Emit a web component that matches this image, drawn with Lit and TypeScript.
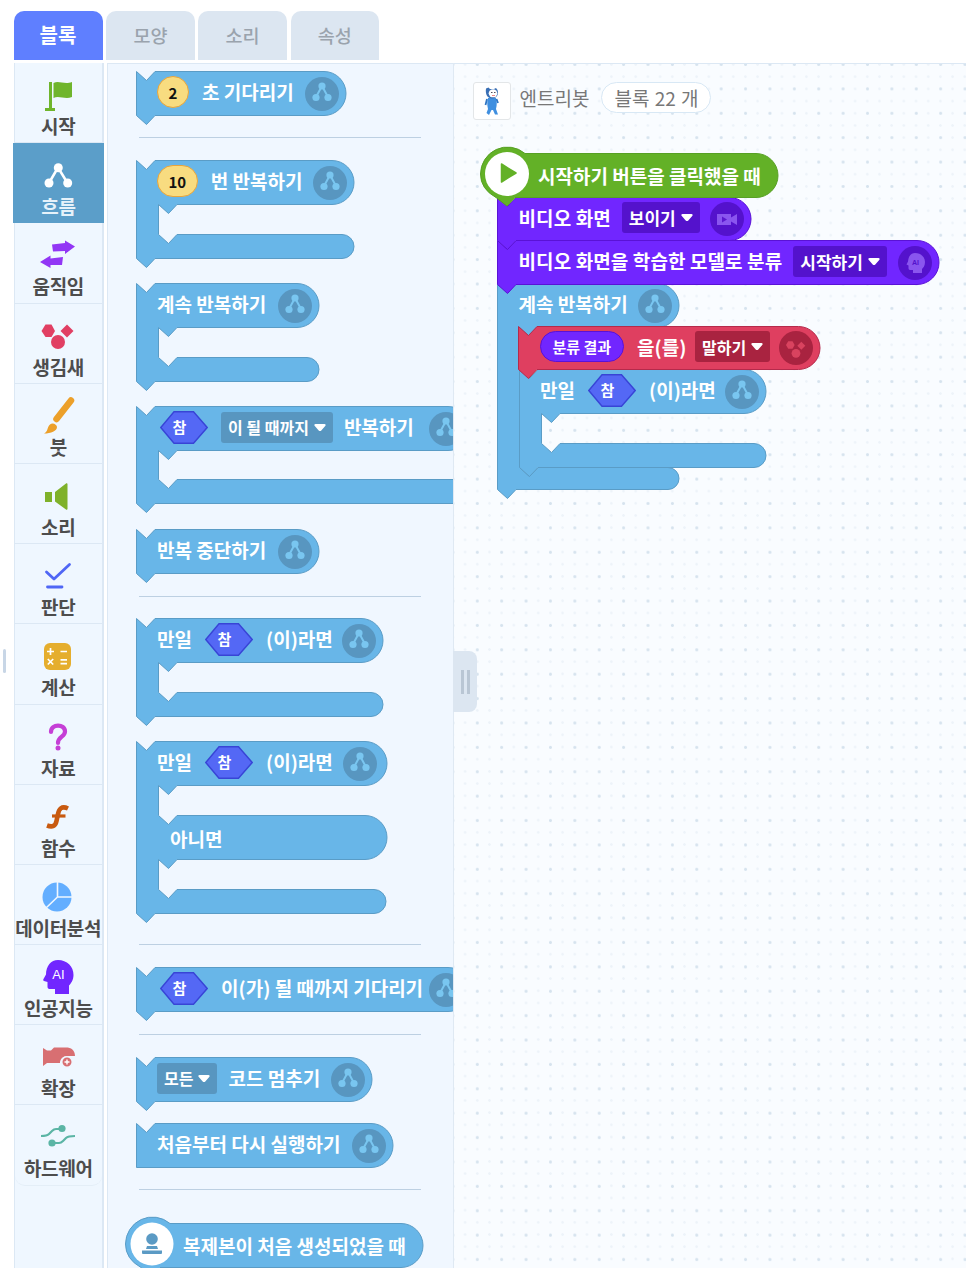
import { LitElement, html, css, svg, nothing } from "lit";
import { customElement, property } from "lit/decorators.js";

type Item =
  | { t: "text"; v: string }
  | { t: "num"; v: string }
  | { t: "hex" }
  | { t: "dd"; v: string }
  | { t: "pill"; v: string };

const T = (v: string): Item => ({ t: "text", v });
const N = (v: string): Item => ({ t: "num", v });
const H = (): Item => ({ t: "hex" });
const D = (v: string): Item => ({ t: "dd", v });
const P = (v: string): Item => ({ t: "pill", v });

interface Shape {
  w: number;
  gaps?: number[];
  mid?: number;
  barW?: number;
  barH?: number;
  notch?: boolean;
  h?: number;
  circleRight?: number;
}

function stmtPath(s: Shape) {
  const h = s.h ?? 44;
  const r = h / 2;
  const arm = 22;
  let d = `M.5,.5 L10.5,9.5 L19,.5 H${s.w - r} a${r},${r} 0 0 1 0,${h}`;
  let y = h + 0.5;
  const gaps = s.gaps ?? [];
  gaps.forEach((g, i) => {
    d += ` H${arm + 19} L${arm + 10.5},${y + 9} L${arm + 0.5},${y} V${y + g} L${arm + 10.5},${y + g + 9} L${arm + 19},${y + g}`;
    y += g;
    if (i < gaps.length - 1) {
      d += ` H${(s.mid ?? s.w) - 22} a22,22 0 0 1 0,44`;
      y += 44;
    } else {
      const bh = s.barH ?? 24;
      d += ` H${(s.barW ?? s.w) - bh / 2} a${bh / 2},${bh / 2} 0 0 1 0,${bh}`;
      y += bh;
    }
  });
  d += s.notch === false ? ` H.5 Z` : ` H19 L10.5,${y + 9} L.5,${y} Z`;
  return { d, height: y - 0.5 };
}

function hatPath(w: number) {
  return `M.5,28 A27,27 0 0 1 45,7.5 H${w - 22} a22,22 0 0 1 0,44 H35 L27,60 L16,51.5 Q.5,43 .5,28 Z`;
}

const flowIcon = svg`<svg class="ci" viewBox="0 0 34 34"><path d="M17 9 L11 20 M17 9 L23 20" fill="none" stroke="currentColor" stroke-width="2"/><circle cx="17" cy="9" r="3.6" fill="currentColor"/><circle cx="11" cy="20.5" r="3.6" fill="currentColor"/><circle cx="23" cy="20.5" r="3.6" fill="currentColor"/></svg>`;
const videoIcon = svg`<svg class="ci" viewBox="0 0 34 34"><path d="M7 12 H21 V23 H7 Z M21 15.5 L27 12 V23 L21 19.5 Z" fill="currentColor"/><path d="M12 14.5 L17 17.5 L12 20.5 Z" fill="#5c18cf"/></svg>`;
const aiIcon = svg`<svg class="ci" viewBox="0 0 34 34"><path d="M17 7 C23 7 27 11 27 16 C27 20 25 22 24 23 V27 H15 V24 H12 C11 24 10.5 23 10.5 22 V19.5 L8.5 18.5 L10 15.5 C10.5 10 13 7 17 7 Z" fill="currentColor"/><text x="17.5" y="19" text-anchor="middle" class="ait">AI</text></svg>`;
const looksIcon = svg`<svg class="ci" viewBox="0 0 34 34"><path d="M7 14 L9.200 10.300 H13.500 L15.600 14 L13.500 17.700 H9.200 Z" fill="currentColor"/><path d="M22.300 10.700 L26.300 14.700 L22.300 18.700 L18.300 14.700 Z" fill="currentColor"/><circle cx="17" cy="22.300" r="4.400" fill="currentColor"/></svg>`;
const circleIcons: Record<string, unknown> = { flow: flowIcon, video: videoIcon, ai: aiIcon, looks: looksIcon };
const arrow = svg`<svg class="arr" viewBox="0 0 12 9"><path d="M1.500 1 H10.500 C11.500 1 12 2 11.400 2.800 L7.300 7.400 C6.500 8.300 5.500 8.300 4.700 7.400 L.6 2.800 C0 2 .5 1 1.500 1 Z" fill="#fff"/></svg>`;

@customElement("code-block")
class CodeBlock extends LitElement {
  @property({ type: Object }) shape: Shape = { w: 100 };
  @property({ type: Array }) rows: Item[][] = [];
  @property() icon = "flow";
  @property() hat = "";
  @property() theme = "blue";

  static styles = css`
    :host {
      display: block;
      position: relative;
      --fill: #68b6e8;
      --line: #5a9cc6;
      --dark: #5896c0;
      --glyph: #79c6f0;
      font-family: "Noto Sans CJK KR", "Noto Sans", sans-serif;
      color: #fff;
    }
    :host([theme="purple"]) { --fill: #7126ff; --line: #5a12d6; --dark: #5412cc; --glyph: #8a55ef; }
    :host([theme="red"]) { --fill: #df3f60; --line: #b52a4b; --dark: #a92340; --glyph: #d9435f; }
    :host([theme="green"]) { --fill: #63b127; --line: #57a024; --dark: #4f8f1f; --glyph: #63b127; }
    .bg { position: absolute; left: 0; top: 0; overflow: visible; }
    .bg path.s { fill: var(--fill); stroke: var(--line); stroke-width: 1; }
    .wrap { display: flow-root; }
    .row {
      position: relative;
      display: flex;
      align-items: center;
      gap: 13px;
      height: 44px;
      padding-left: 21.5px;
      box-sizing: border-box;
      white-space: nowrap;
    }
    .row > * { flex: none; }
    .row.h43 { height: 43px; }
    .row.hatrow { padding-left: 58px; margin-top: 7px; height: 44px; }
    .row.else { padding-left: 34.500px; }
    .row.second { margin-top: 30px; }
    .text { font-size: 19px; font-weight: 700; line-height: 1; position: relative; top: -1.500px; }
    :host([theme="purple"]) .text { letter-spacing: 0.1px; }
    .hatrow .text { top: 0.500px; }
    .else .text { top: 1.500px; }
    .num {
      box-sizing: border-box;
      min-width: 32px;
      height: 32px;
      padding: 0 10.500px;
      border-radius: 16px;
      background: #f8dc80;
      border: 1.500px solid #e8a53c;
      color: #111;
      font-size: 15px;
      font-weight: 700;
      display: flex;
      align-items: center;
      justify-content: center;
      position: relative;
      top: -1px;
    }
    .num.one { padding: 0; }
    .hex { position: relative; width: 48px; height: 33px; top: -1px; }
    .hex svg { position: absolute; inset: 0; }
    .hex span {
      position: absolute; left: 9px; width: 21px; top: 0; height: 31px; display: flex; align-items: center; justify-content: center;
      font-size: 15px; font-weight: 700;
    }
    .first { margin-left: 3px; }
    .dd {
      display: flex; align-items: center; gap: 5px;
      height: 31px; padding: 0 7px; border-radius: 3px;
      background: var(--dark);
      font-size: 16px; font-weight: 700;
      position: relative; top: -1px; margin-right: -2px;
    }
    :host([theme="purple"]) .dd { font-size: 17px; margin-left: -2px; }
    :host([theme="red"]) .dd { margin-left: -4px; padding: 0 6.500px; }
    .arr { width: 12px; height: 9px; flex: none; }
    .pill {
      box-sizing: border-box; height: 31px; padding: 0 12px; border-radius: 16px;
      background: #7126ff; border: 1px solid #5a12d6;
      font-size: 15px; font-weight: 700; display: flex; align-items: center; position: relative; top: -1px;
    }
    .circle {
      position: absolute; top: 5.500px;
      width: 34px; height: 34px; border-radius: 50%;
      background: var(--dark); color: var(--glyph);
    }
    .row.h43 .circle { top: 5px; }
    .ci { width: 34px; height: 34px; display: block; }
    .ait { font: 700 7px "Liberation Sans", sans-serif; fill: var(--dark); }
  `;

  private item(it: Item, i: number) {
    switch (it.t) {
      case "text":
        return html`<span class="text">${it.v}</span>`;
      case "num":
        return html`<span class="num ${it.v.length === 1 ? "one" : ""}">${it.v}</span>`;
      case "hex":
        return html`<span class="hex ${i === 0 ? "first" : ""}"><svg viewBox="0 0 48 33" width="48" height="33"><path d="M.8 16.500 L14 .8 H33.500 L47.200 16.500 L33.500 32.200 H14 Z" fill="#5468f5" stroke="#3844d6" stroke-width="1.400"/></svg><span>참</span></span>`;
      case "dd":
        return html`<span class="dd">${it.v}${arrow}</span>`;
      case "pill":
        return html`<span class="pill">${it.v}</span>`;
    }
  }

  render() {
    const isHat = !!this.hat;
    const p = isHat ? { d: hatPath(this.shape.w), height: 52 } : stmtPath(this.shape);
    const w = this.shape.w;
    const hatArt =
      this.hat === "play"
        ? svg`<circle cx="27" cy="28" r="22" fill="#fff"/><path d="M21.500 18 L36 27 L21.500 36 Z" fill="#63b127" stroke="#63b127" stroke-width="1.500" stroke-linejoin="round"/>`
        : this.hat === "person"
          ? svg`<circle cx="27" cy="28" r="21.500" fill="#fff"/><circle cx="27" cy="23" r="5.800" fill="#5b9ac4"/><path d="M22 30 H32 L33 33 H21 Z M17 34.500 H37 V37 Q37 38 36 38 H18 Q17 38 17 37 Z" fill="#5b9ac4"/>`
          : nothing;
    return html`
      <svg class="bg" width=${w} height=${p.height} viewBox="0 0 ${w} ${p.height}">
        <path class="s" d=${p.d}></path>${hatArt}
      </svg>
      <div class="wrap" style="width:${w}px;height:${p.height}px">
        ${this.rows.map(
          (row, ri) => html`<div
            class="row ${isHat ? "hatrow" : ""} ${ri > 0 ? "second else" : ""} ${this.shape.h === 43 ? "h43" : ""}"
            style="width:${ri > 0 ? (this.shape.mid ?? w) : w}px"
          >
            ${row.map((it, i) => this.item(it, i))}
            ${this.icon && !isHat && ri === 0
              ? html`<span class="circle" style="right:${this.shape.circleRight ?? 7}px">${circleIcons[this.icon]}</span>`
              : nothing}
          </div>`,
        )}
      </div>
    `;
  }
}

interface PaletteBlock {
  gap: number;
  shape?: Shape;
  rows?: Item[][];
  hat?: string;
  sep?: boolean;
}

const palette: PaletteBlock[] = [
  { gap: 0, shape: { w: 210 }, rows: [[N("2"), T("초 기다리기")]] },
  { gap: 22, sep: true },
  { gap: 22, shape: { w: 218, gaps: [30] }, rows: [[N("10"), T("번 반복하기")]] },
  { gap: 25, shape: { w: 183, gaps: [30] }, rows: [[T("계속 반복하기")]] },
  { gap: 25, shape: { w: 334, gaps: [29] }, rows: [[H(), D("이 될 때까지"), T("반복하기")]] },
  { gap: 26, shape: { w: 183 }, rows: [[T("반복 중단하기")]] },
  { gap: 23, sep: true },
  { gap: 21, shape: { w: 247, gaps: [30] }, rows: [[T("만일"), H(), T("(이)라면")]] },
  { gap: 25, shape: { w: 251, gaps: [30, 30], mid: 251, barW: 250, circleRight: 10 }, rows: [[T("만일"), H(), T("(이)라면")], [T("아니면")]] },
  { gap: 31, sep: true },
  { gap: 22, shape: { w: 334 }, rows: [[H(), T("이(가) 될 때까지 기다리기")]] },
  { gap: 23, sep: true },
  { gap: 22, shape: { w: 236 }, rows: [[D("모든"), T("코드 멈추기")]] },
  { gap: 22, shape: { w: 257, notch: false }, rows: [[T("처음부터 다시 실행하기")]] },
  { gap: 22, sep: true },
  { gap: 26, hat: "person", shape: { w: 298 }, rows: [[T("복제본이 처음 생성되었을 때")]] },
];

interface WsBlock {
  x: number;
  y: number;
  theme: string;
  icon: string;
  shape: Shape;
  rows: Item[][];
  hat?: string;
}

// Bottom-most first: each block's lower notch laps over the one beneath it.
const canvas: WsBlock[] = [
  { x: 497, y: 283, theme: "blue", icon: "flow", shape: { w: 182, gaps: [140], barW: 182, barH: 22 }, rows: [[T("계속 반복하기")]] },
  { x: 518.500, y: 369, theme: "blue", icon: "flow", shape: { w: 247, gaps: [30] }, rows: [[T("만일"), H(), T("(이)라면")]] },
  { x: 518, y: 326, theme: "red", icon: "looks", shape: { w: 302, h: 43 }, rows: [[P("분류 결과"), T("을(를)"), D("말하기")]] },
  { x: 497, y: 240, theme: "purple", icon: "ai", shape: { w: 442 }, rows: [[T("비디오 화면을 학습한 모델로 분류"), D("시작하기")]] },
  { x: 497, y: 197, theme: "purple", icon: "video", shape: { w: 254, h: 43 }, rows: [[T("비디오 화면"), D("보이기")]] },
  { x: 480, y: 146, theme: "green", icon: "", hat: "play", shape: { w: 298 }, rows: [[T("시작하기 버튼을 클릭했을 때")]] },
];

const icons: Record<string, unknown> = {
  시작: svg`<path d="M11 8 H14 V34 H17 V37 H7 V34 H11 Z" fill="#6fb52c"/><path d="M15.500 9 C21 6 26 11 34 8 V23 C27 26 21 21 15.500 24 Z" fill="#6fb52c"/>`,
  흐름: svg`<path d="M19 13.500 L10 29 M19 13.500 L28.500 29" stroke="#fff" stroke-width="2.500" fill="none"/><circle cx="19.300" cy="13.700" r="4.500" fill="#fff"/><circle cx="10" cy="29" r="4.500" fill="#fff"/><circle cx="28.700" cy="29" r="4.500" fill="#fff"/>`,
  움직임: svg`<path d="M14 10.500 L27 9 V6.500 L37 12.500 L27 20 V17 L15 17.500 Z M25 23 L12.500 24.500 V21.500 L2 28 L12.500 34 V31 L24 31 Z" fill="#9236f5"/>`,
  생김새: svg`<path d="M3.500 16 L7.500 9.500 H13.500 L17 16 L13.500 22 H7.500 Z" fill="#e13f63"/><path d="M29 9.500 L35.500 16 L29 22.500 L22.500 16 Z" fill="#e13f63"/><circle cx="20" cy="27" r="7" fill="#e13f63"/>`,
  붓: svg`<path d="M33 5.500 L18.500 24" stroke="#eca02a" stroke-width="6.500" stroke-linecap="round"/><path d="M6 38.500 C10 37 9 32 12 29.500 C15 27 19 30 19 32 C19 36 13 38.500 6 38.500 Z" fill="#eca02a"/>`,
  소리: svg`<path d="M7 17 H14 V27 H7 Z" fill="#7fb12a"/><path d="M17 17 L28 8.500 C28.500 8 29.500 8.500 29.500 9 V34 C29.500 34.500 28.500 35 28 34.500 L17 26.500 Z" fill="#7fb12a"/>`,
  판단: svg`<path d="M8.500 17 L16 24 L31.500 9.500" fill="none" stroke="#4f66f5" stroke-width="2.800" stroke-linecap="round" stroke-linejoin="round"/><path d="M9.500 32 H24" stroke="#4f66f5" stroke-width="2.800" stroke-linecap="round"/>`,
  계산: svg`<rect x="6" y="8" width="27" height="27" rx="6" fill="#e5ae2e"/><path d="M12.500 13 V20 M9 16.500 H16 M22.500 16.500 H29 M9.800 24 L15.200 29.500 M15.200 24 L9.800 29.500 M22.500 24.800 H29 M22.500 28.600 H29" stroke="#fff" stroke-width="1.700" fill="none"/>`,
  자료: svg`<path d="M13 16 C13 7.500 27 7.500 27 15.500 C27 21 20 20.500 20 27" fill="none" stroke="#c53fd6" stroke-width="4.200" stroke-linecap="round"/><circle cx="20" cy="32" r="2.500" fill="#c53fd6"/>`,
  함수: svg`<path d="M30 12.500 C23.500 9.500 21 13 20 18 L18.500 25 C17.500 30 14.500 31.500 9 29.500" fill="none" stroke="#c85a10" stroke-width="4.600"/><path d="M14 20 H27.500" stroke="#c85a10" stroke-width="3.200"/>`,
  데이터분석: svg`<circle cx="19" cy="21" r="14.500" fill="#63aeff"/><path d="M19.500 5 V21 H35 M19.500 21 L8 32" fill="none" stroke="#f0f7ff" stroke-width="1.600"/>`,
  인공지능: svg`<path d="M20 4 C29 4 35.500 10.500 35.500 19 C35.500 24 33 27.500 31 29.500 V38 H17 V33 H11.500 C10 33 9.500 32 9.500 30.500 V26 L6 25 C5 24.500 5 24 5.500 23 L8 18.500 C8 10 13 4 20 4 Z" fill="#7126ff"/><text x="20.500" y="22.500" text-anchor="middle" fill="#fff" font-family="Liberation Sans, sans-serif" font-weight="400" font-size="13">AI</text>`,
  확장: svg`<path d="M5 12 L9 14.500 H13 L16 11.500 H28 C33 11.500 37 14 37 20 H29 C25 20 22 23 22 27 H9 L5 30 Z" fill="#d86f72"/><circle cx="29" cy="26" r="5.200" fill="#d86f72" stroke="#f0f7ff" stroke-width="1.400"/><path d="M26.500 26 H31.500 M29 23.500 V28.500" stroke="#fff" stroke-width="1.400"/>`,
  하드웨어: svg`<path d="M3 20 C7 20 9 20 11 18 L14 15 C15 14 16 13 18 13 H24 M14 27 H21 C23 27 24 26 25 25 L28 22 C30 20 33 20 37 20" fill="none" stroke="#5bb5a5" stroke-width="2.200"/><circle cx="24" cy="12.500" r="3.600" fill="#5bb5a5"/><circle cx="14" cy="27" r="3.600" fill="#5bb5a5"/>`,
};

const labels = Object.keys(icons);
const tabs = ["블록", "모양", "소리", "속성"];

@customElement("app-root")
export class AppRoot extends LitElement {
  static styles = css`
    :host {
      display: block;
      width: 966px;
      height: 1268px;
      overflow: hidden;
      position: relative;
      background: #fff;
      font-family: "Noto Sans CJK KR", "Noto Sans", sans-serif;
    }
    .tabs { display: flex; gap: 3.700px; padding: 11px 0 0 13.500px; height: 49px; }
    .tab {
      width: 88.500px; height: 49px; border-radius: 10px 10px 0 0;
      background: #dce6f1; color: #9aa3ad;
      display: flex; align-items: center; justify-content: center;
      font-size: 18.500px; font-weight: 500; padding-bottom: 2px; box-sizing: border-box;
    }
    .tab.on { background: #5f7fff; color: #fff; width: 89px; font-size: 20px; font-weight: 700; }
    .body {
      display: flex; height: 1205px; margin-top: 3px;
    }
    .side {
      margin-left: 13.500px; width: 90.500px; flex: none; box-sizing: border-box;
      background: #eff7ff;
      border-left: 1.500px solid #dce8f4; border-right: 2px solid #dce8f4;
    }
    .cat {
      height: 80.200px; box-sizing: border-box; border-bottom: 1.500px solid #dce8f4;
      display: flex; flex-direction: column; align-items: center;
      color: #4d4d4d;
    }
    .cat:last-child { border-radius: 0 0 10px 10px; border-bottom: 1.500px solid #e4eef7; }
    .cat.on { background: #5b9ec9; color: #e6f2fa; border-bottom-color: #5b9ec9; margin: 0 -2px 0 -1.500px; }
    .cat svg { width: 40px; height: 40px; margin-top: 11px; flex: none; }
    .cat span { font-size: 19px; font-weight: 700; line-height: 24px; margin-top: 0; white-space: nowrap; letter-spacing: -0.3px; }
    .pal {
      margin-left: 3px; width: 346px; flex: none; overflow: hidden; box-sizing: border-box;
      background: #f0f7ff; border-top: 1px solid #dce8f4; border-left: 1px solid #dce8f4;
      padding: 7px 0 0 27.500px; position: relative;
    }
    .sep { height: 1px; background: #bdd0e2; width: 282px; margin-left: 3.500px; }
    code-block { flex: none; }
    .pal code-block.hatb { margin-left: -10.500px; }
    .ws {
      flex: 1; position: relative; border-top: 1px solid #dce8f4; border-left: 1px solid #dfe9f3;
      background-color: #f9fcff;
      background-image:
        radial-gradient(circle, #d6e3ee 1.100px, transparent 1.700px),
        radial-gradient(circle, #edf3f9 1px, transparent 1.500px);
      background-size: 24.400px 24.400px, 12.200px 12.200px;
      background-position: 11.100px -11.700px, 5px -5.600px;
    }
    .canvas { position: absolute; left: -454px; top: -64px; width: 966px; height: 1268px; }
    .canvas code-block { position: absolute; }
    .head { position: absolute; left: 19px; top: 18px; display: flex; align-items: flex-start; gap: 8.500px; color: #777; }
    .thumb { width: 38px; height: 38px; box-sizing: border-box; background: #fff; border: 1.500px solid #e3e6e8; border-radius: 3px; display: flex; align-items: center; justify-content: center; }
    .name { font-size: 19px; line-height: 32px; margin-right: 3.500px; }
    .count { height: 31px; box-sizing: border-box; border: 1.500px solid #d8e8f5; background: #fff; border-radius: 16px; padding: 0 12px; font-size: 19px; word-spacing: 1px; display: flex; align-items: center; }
    .grip {
      position: absolute; left: -1px; top: 587px; width: 24px; height: 61px; background: #dce6f1; border-radius: 0 8px 8px 0;
      display: flex; gap: 3px; align-items: center; justify-content: center;
    }
    .grip i { width: 3px; height: 24px; background: #b9c6d4; }
    .lgrip { position: absolute; left: 3px; top: 649px; width: 3px; height: 24px; background: #c8d6e6; border-radius: 2px; }
  `;

  render() {
    return html`
      <div class="tabs">
        ${tabs.map((t, i) => html`<div class="tab ${i === 0 ? "on" : ""}">${t}</div>`)}
      </div>
      <div class="body">
        <nav class="side">
          ${labels.map(
            (l) => html`<div class="cat ${l === "흐름" ? "on" : ""}">
              <svg viewBox="0 0 40 40">${icons[l]}</svg>
              <span>${l}</span>
            </div>`,
          )}
        </nav>
        <section class="pal">
          ${palette.map((b) =>
            b.sep
              ? html`<div class="sep" style="margin-top:${b.gap}px"></div>`
              : html`<code-block
                  class=${b.hat ? "hatb" : ""}
                  style="margin-top:${b.gap}px"
                  .shape=${b.shape}
                  .rows=${b.rows}
                  .hat=${b.hat ?? ""}
                ></code-block>`,
          )}
        </section>
        <main class="ws">
          <div class="head">
            <div class="thumb">
              <svg width="22" height="32" viewBox="0 0 22 32">
                <path d="M7 13 C6 16 6 20 7 24 L5.500 28 L8 30 L10.500 25 H12 L14 29.500 H17 L15 24 C16 20 16 16 15 13 Z" fill="#3f8fe0"/>
                <path d="M5 3.500 L7.500 2.500 L9 4 H13 L15 3 L16.500 5 C18 9 16 13.500 11 13.500 C7 13.500 4 10 5 3.500 Z" fill="#3a6fb5"/>
                <ellipse cx="12" cy="8.300" rx="4.300" ry="4" fill="#fff"/>
                <path d="M10 7.500 H11.500 M13 7.500 H14.500" stroke="#223" stroke-width=".8"/>
                <path d="M11 10.500 H14" stroke="#e88" stroke-width="1"/>
                <path d="M6 14 L4.500 20 M15.500 14 L17 18" stroke="#2f76c4" stroke-width="1.800"/>
              </svg>
            </div>
            <span class="name">엔트리봇</span>
            <span class="count">블록 22 개</span>
          </div>
          <div class="canvas">
            ${canvas.map(
              (b) => html`<code-block
                style="left:${b.x}px;top:${b.y}px"
                theme=${b.theme}
                .icon=${b.icon}
                .hat=${b.hat ?? ""}
                .shape=${b.shape}
                .rows=${b.rows}
              ></code-block>`,
            )}
          </div>
          <div class="grip"><i></i><i></i></div>
        </main>
      </div>
      <div class="lgrip"></div>
    `;
  }
}
